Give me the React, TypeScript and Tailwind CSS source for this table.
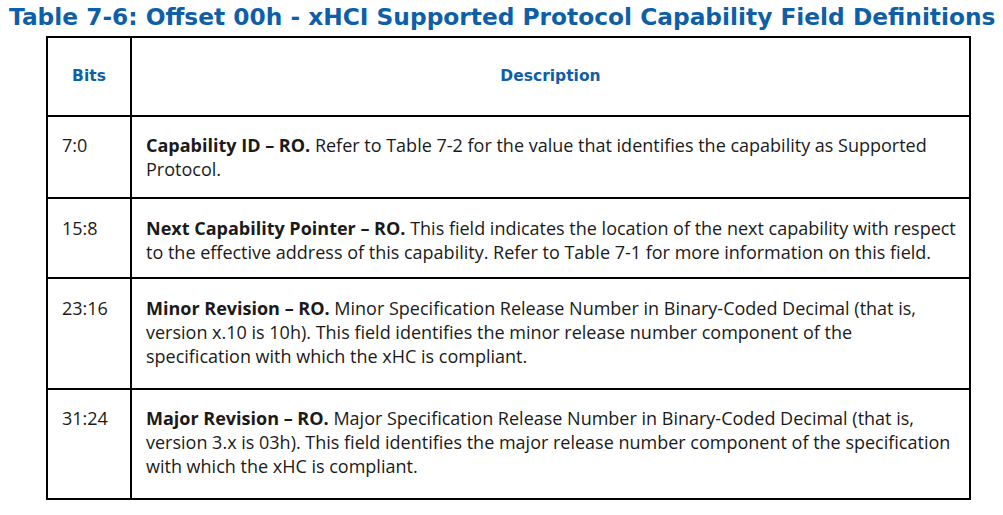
import React from "react";

const rows = [
  {
    bits: "7:0",
    h: "h-[82px]",
    pt: "pt-[16px]",
    title: "Capability ID – RO.",
    lines: [
      "Refer to Table 7-2 for the value that identifies the capability as Supported",
      "Protocol.",
    ],
  },
  {
    bits: "15:8",
    h: "h-[80px]",
    pt: "pt-[17px]",
    title: "Next Capability Pointer – RO.",
    lines: [
      "This field indicates the location of the next capability with respect",
      "to the effective address of this capability. Refer to Table 7-1 for more information on this field.",
    ],
  },
  {
    bits: "23:16",
    h: "h-[111px]",
    pt: "pt-[17px]",
    title: "Minor Revision – RO.",
    lines: [
      "Minor Specification Release Number in Binary-Coded Decimal (that is,",
      "version x.10 is 10h). This field identifies the minor release number component of the",
      "specification with which the xHC is compliant.",
    ],
  },
  {
    bits: "31:24",
    h: "h-[108px]",
    pt: "pt-[16px]",
    title: "Major Revision – RO.",
    lines: [
      "Major Specification Release Number in Binary-Coded Decimal (that is,",
      "version 3.x is 03h). This field identifies the major release number component of the specification",
      "with which the xHC is compliant.",
    ],
  },
];

export default function App() {
  return (
    <div className="w-[1003px] h-[515px] bg-white overflow-hidden">
      <div
        className="h-[36px] pl-[9px] text-[23.3px] leading-[34px] font-bold text-[#0f5fa8] whitespace-nowrap"
        style={{ fontFamily: '"DejaVu Sans", Verdana, sans-serif' }}
      >
        Table 7-6: Offset 00h - xHCI Supported Protocol Capability Field Definitions
      </div>
      <div className="ml-[46px] w-[925px] border-2 border-black">
        <div
          className="flex h-[79px] border-b-2 border-black text-[#0f5fa8] font-bold text-[15.5px]"
          style={{ fontFamily: '"DejaVu Sans", Verdana, sans-serif' }}
        >
          <div className="w-[84px] border-r-2 border-black flex items-center justify-center">
            Bits
          </div>
          <div className="flex-1 flex items-center justify-center">Description</div>
        </div>
        {rows.map((r, i) => (
          <div
            key={r.bits}
            className={`flex ${r.h} ${i < rows.length - 1 ? "border-b-2 border-black" : ""} text-[#1a1a1a] text-[18px] leading-[24px]`}
            style={{ fontFamily: '"Open Sans", "Noto Sans", sans-serif' }}
          >
            <div className={`w-[84px] border-r-2 border-black pl-[14px] ${r.pt}`}>{r.bits}</div>
            <div className={`flex-1 pl-[14px] ${r.pt} whitespace-nowrap`}>
              {r.lines.map((l, j) => (
                <div key={j}>
                  {j === 0 && <span className="font-bold">{r.title} </span>}
                  {l}
                </div>
              ))}
            </div>
          </div>
        ))}
      </div>
    </div>
  );
}
